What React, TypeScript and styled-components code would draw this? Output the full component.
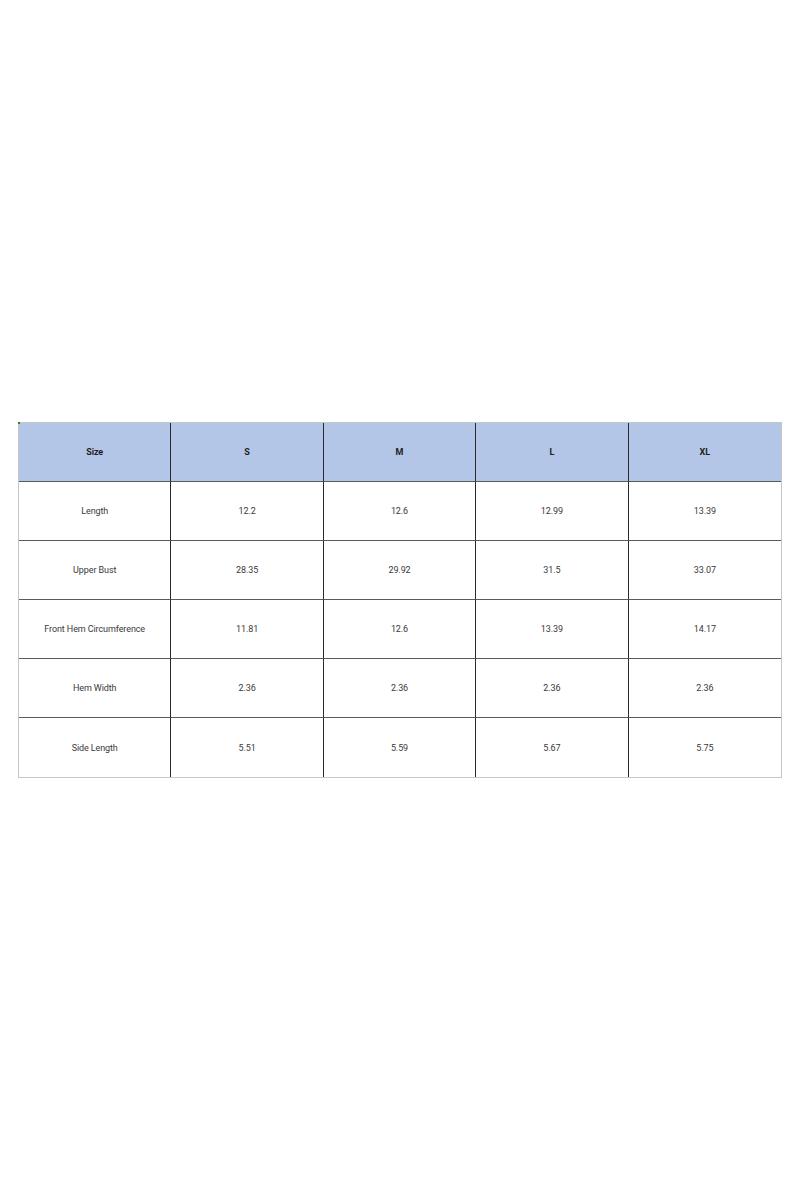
import React from "react";
import styled, { createGlobalStyle } from "styled-components";

const GlobalStyle = createGlobalStyle`
  html, body {
    margin: 0;
    padding: 0;
    background: #ffffff;
  }
`;

const Page = styled.div`
  width: 800px;
  height: 1200px;
  box-sizing: border-box;
  padding: 0 18px;
  display: flex;
  flex-direction: column;
  justify-content: center;
  font-family: Roboto, "Liberation Sans", sans-serif;
`;

const Grid = styled.div`
  display: grid;
  grid-template-columns: repeat(5, 1fr);
  grid-auto-rows: 59px;
  border: 1px solid #c6c6c6;
  position: relative;
`;

const Corner = styled.span`
  position: absolute;
  left: -1px;
  top: -1px;
  width: 2px;
  height: 2px;
  background: #2e7d32;
`;

const Cell = styled.div<{ $head?: boolean; $lastCol?: boolean; $lastRow?: boolean }>`
  display: flex;
  align-items: center;
  justify-content: center;
  background: ${(p) => (p.$head ? "#b4c6e7" : "#ffffff")};
  border-right: ${(p) => (p.$lastCol ? "none" : "1px solid #2a2a2a")};
  border-bottom: ${(p) => (p.$lastRow ? "none" : "1px solid #5a5a5a")};
  font-size: 9px;
  font-weight: ${(p) => (p.$head ? 700 : 400)};
  color: ${(p) => (p.$head ? "#1e1e1e" : "#3a3a3a")};
  letter-spacing: -0.1px;
`;

const header = ["Size", "S", "M", "L", "XL"];

const rows: string[][] = [
  ["Length", "12.2", "12.6", "12.99", "13.39"],
  ["Upper Bust", "28.35", "29.92", "31.5", "33.07"],
  ["Front Hem Circumference", "11.81", "12.6", "13.39", "14.17"],
  ["Hem Width", "2.36", "2.36", "2.36", "2.36"],
  ["Side Length", "5.51", "5.59", "5.67", "5.75"],
];

export default function App() {
  return (
    <>
      <GlobalStyle />
      <Page>
        <Grid>
          <Corner />
          {header.map((h, i) => (
            <Cell key={h} $head $lastCol={i === header.length - 1}>
              {h}
            </Cell>
          ))}
          {rows.map((row, r) =>
            row.map((v, c) => (
              <Cell
                key={r + "-" + c}
                $lastCol={c === row.length - 1}
                $lastRow={r === rows.length - 1}
              >
                {v}
              </Cell>
            ))
          )}
        </Grid>
      </Page>
    </>
  );
}
